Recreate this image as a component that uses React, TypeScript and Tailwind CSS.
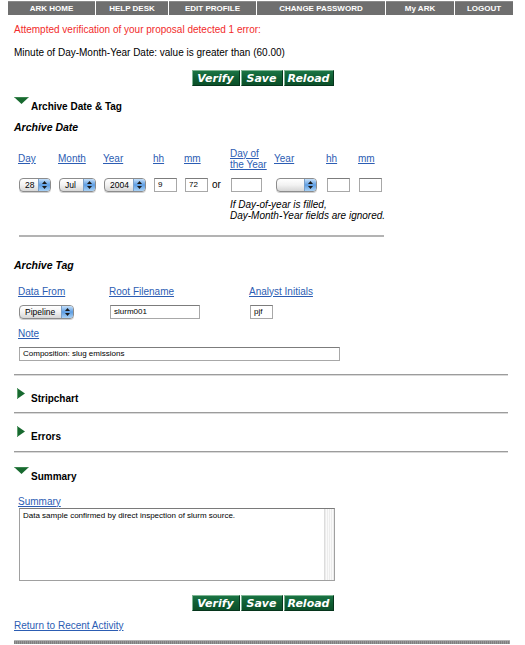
import React from "react";

const NAV = [
  { label: "ARK HOME", w: "w-[87px]" },
  { label: "HELP DESK", w: "w-[72px]" },
  { label: "EDIT PROFILE", w: "w-[87px]" },
  { label: "CHANGE PASSWORD", w: "w-[128px]" },
  { label: "My ARK", w: "w-[68px]" },
  { label: "LOGOUT", w: "w-[58px]" },
];

function GreenButton({ label, w }: { label: string; w: string }) {
  return (
    <button
      className={`${w} h-[16px] flex items-center justify-center border border-t-[#7fb593] border-l-[#7fb593] border-b-[#06351c] border-r-[#06351c] bg-gradient-to-b from-[#1a7444] via-[#0f5e33] to-[#0b5029] text-white text-[11px] leading-none font-bold italic font-['DejaVu_Sans',sans-serif]`}
    >
      {label}
    </button>
  );
}

function ButtonBar() {
  return (
    <div className="flex justify-center gap-[1px]">
      <GreenButton label="Verify" w="w-[48px]" />
      <GreenButton label="Save" w="w-[42px]" />
      <GreenButton label="Reload" w="w-[50px]" />
    </div>
  );
}

function DownTriangle() {
  return (
    <svg width="15" height="7" viewBox="0 0 15 7" className="shrink-0">
      <polygon points="0,0 15,0 7.5,7" fill="#17692f" />
      <line x1="0.5" y1="0.5" x2="14.5" y2="0.5" stroke="#5fa06f" strokeWidth="1" strokeDasharray="1 1" />
    </svg>
  );
}

function RightTriangle() {
  return (
    <svg width="8" height="11" viewBox="0 0 8 11" className="shrink-0">
      <polygon points="0,0 8,5.5 0,11" fill="#17692f" />
      <line x1="0.5" y1="0.5" x2="0.5" y2="10.5" stroke="#5fa06f" strokeWidth="1" />
    </svg>
  );
}

function SectionHeader({ label, open }: { label: string; open: boolean }) {
  if (open) {
    return (
      <div className="flex items-start pl-[14px]">
        <div className="mt-[1px]">
          <DownTriangle />
        </div>
        <span className="ml-[2px] mt-[5px] text-[10px] leading-[12px] font-bold text-black">{label}</span>
      </div>
    );
  }
  return (
    <div className="flex items-start pl-[17px]">
      <div className="mt-[1px]">
        <RightTriangle />
      </div>
      <span className="ml-[6px] mt-[6px] text-[10px] leading-[12px] font-bold text-black">{label}</span>
    </div>
  );
}

function Link({ children, className = "" }: { children: React.ReactNode; className?: string }) {
  return (
    <a href="#" className={`text-[#2c5db3] underline text-[10px] leading-[11px] ${className}`}>
      {children}
    </a>
  );
}

function AquaSelect({ value, w }: { value: string; w: string }) {
  return (
    <div
      className={`${w} h-[14px] flex items-stretch rounded-[4px] border border-[#8c8c8c] bg-gradient-to-b from-white via-[#f2f2f2] to-[#d6d6d6] overflow-hidden shadow-[0_1px_0_#d0d0d0]`}
    >
      <div className="flex-1 flex items-center pl-[5px] text-[8.5px] leading-none text-black">{value}</div>
      <div className="w-[12px] flex items-center justify-center border-l border-[#7a9fc8] bg-gradient-to-b from-[#c5e0fa] via-[#5d9de2] to-[#a9d2f6]">
        <svg width="5" height="8" viewBox="0 0 5 8">
          <polygon points="2.5,0 5,3 0,3" fill="#1a1a1a" />
          <polygon points="0,5 5,5 2.5,8" fill="#1a1a1a" />
        </svg>
      </div>
    </div>
  );
}

function TextBox({ value = "", w }: { value?: string; w: string }) {
  return (
    <div
      className={`${w} h-[14px] flex items-center border border-[#a8a8a8] border-t-[#7c7c7c] bg-white pl-[3px] text-[8px] leading-none text-black`}
    >
      {value}
    </div>
  );
}

function Rule() {
  return <div className="ml-[14px] w-[494px] h-[2px] border-t border-[#9c9c9c] bg-[#d9d9d9]" />;
}

export default function App() {
  return (
    <div className="w-[525px] h-[645px] overflow-hidden bg-white font-['Liberation_Sans',Arial,sans-serif] text-black">
      {/* top navigation */}
      <nav className="ml-[8px] mt-[1px] flex h-[14px] w-[505px] gap-[1px]">
        {NAV.map((n) => (
          <div
            key={n.label}
            className={`${n.w} flex items-center justify-center bg-[#6f6f6f] border-t border-[#8a8a8a] text-white text-[8px] font-bold leading-none`}
          >
            {n.label}
          </div>
        ))}
      </nav>

      <p className="mt-[9px] pl-[14px] text-[10px] leading-[12px] text-[#f22b2b]">
        Attempted verification of your proposal detected 1 error:
      </p>
      <p className="mt-[11px] pl-[14px] text-[10px] leading-[12px]">
        Minute of Day-Month-Year Date: value is greater than (60.00)
      </p>

      <div className="mt-[11px]">
        <ButtonBar />
      </div>

      <div className="mt-[10px]">
        <SectionHeader label="Archive Date & Tag" open />
      </div>

      <h3 className="mt-[8px] pl-[14px] text-[10.5px] leading-[13px] font-bold italic">Archive Date</h3>

      {/* date headers */}
      <div className="mt-[13px] ml-[18px] grid grid-cols-[40px_45px_50px_31px_31px_15px_44px_52px_32px_40px] items-center h-[23px]">
        <Link>Day</Link>
        <Link>Month</Link>
        <Link>Year</Link>
        <Link>hh</Link>
        <Link>mm</Link>
        <span />
        <Link className="leading-[11px]">
          Day of
          <br />
          the Year
        </Link>
        <Link>Year</Link>
        <Link>hh</Link>
        <Link>mm</Link>
      </div>

      {/* date controls */}
      <div className="mt-[8px] ml-[18px] grid grid-cols-[40px_45px_50px_31px_31px_15px_44px_52px_32px_40px] items-center h-[14px]">
        <div className="pl-[1px]"><AquaSelect value="28" w="w-[32px]" /></div>
        <div className="pl-[1px]"><AquaSelect value="Jul" w="w-[37px]" /></div>
        <div className="pl-[1px]"><AquaSelect value="2004" w="w-[42px]" /></div>
        <div className="pl-[1px]"><TextBox value="9" w="w-[23px]" /></div>
        <div className="pl-[1px]"><TextBox value="72" w="w-[23px]" /></div>
        <span className="text-[10px] leading-none -ml-[3px]">or</span>
        <div className="pl-[1px]"><TextBox w="w-[31px]" /></div>
        <div className="pl-[2px]"><AquaSelect value="" w="w-[41px]" /></div>
        <div className="pl-[1px]"><TextBox w="w-[23px]" /></div>
        <div className="pl-[1px]"><TextBox w="w-[23px]" /></div>
      </div>

      <p className="mt-[7px] ml-[230px] text-[10px] leading-[11px] italic">
        If Day-of-year is filled,
        <br />
        Day-Month-Year fields are ignored.
      </p>

      <div className="mt-[14px] ml-[19px] w-[365px] h-[2px] bg-[#b3b3b3]" />

      <h3 className="mt-[22px] pl-[14px] text-[10.5px] leading-[13px] font-bold italic">Archive Tag</h3>

      <div className="mt-[13px] ml-[18px] grid grid-cols-[91px_140px_100px] items-center h-[12px]">
        <Link>Data From</Link>
        <Link>Root Filename</Link>
        <Link>Analyst Initials</Link>
      </div>
      <div className="mt-[8px] ml-[18px] grid grid-cols-[91px_140px_100px] items-center h-[14px]">
        <div className="pl-[1px]"><AquaSelect value="Pipeline" w="w-[55px]" /></div>
        <div className="pl-[1px]"><TextBox value="slurm001" w="w-[90px]" /></div>
        <div className="pl-[1px]"><TextBox value="pjf" w="w-[23px]" /></div>
      </div>

      <div className="mt-[8px] ml-[18px] h-[12px] flex items-center">
        <Link>Note</Link>
      </div>
      <div className="mt-[8px] ml-[19px]">
        <TextBox value="Composition: slug emissions" w="w-[321px]" />
      </div>

      <div className="mt-[13px]">
        <Rule />
      </div>
      <div className="mt-[11px]">
        <SectionHeader label="Stripchart" open={false} />
      </div>
      <div className="mt-[7px]">
        <Rule />
      </div>
      <div className="mt-[11px]">
        <SectionHeader label="Errors" open={false} />
      </div>
      <div className="mt-[8px]">
        <Rule />
      </div>
      <div className="mt-[13px]">
        <SectionHeader label="Summary" open />
      </div>

      <div className="mt-[12px] ml-[18px] h-[12px] flex items-center">
        <Link>Summary</Link>
      </div>
      <div className="mt-[1px] ml-[19px] w-[316px] h-[73px] flex border border-[#a0a0a0] border-t-[#7a7a7a] bg-white">
        <div className="flex-1 pl-[3px] pt-[2px] text-[8px] leading-[10px]">
          Data sample confirmed by direct inspection of slurm source.
        </div>
        <div className="w-[10px] h-full border-l border-[#dcdcdc] bg-[repeating-linear-gradient(90deg,#ececec_0px,#ececec_1px,#fafafa_1px,#fafafa_2px)]" />
      </div>

      <div className="mt-[14px]">
        <ButtonBar />
      </div>

      <div className="mt-[9px] pl-[14px] h-[12px] flex items-center">
        <a href="#" className="text-[#2c5db3] underline text-[10px] leading-[12px]">
          Return to Recent Activity
        </a>
      </div>

      <div className="mt-[8px] ml-[14px] w-[496px] h-[4px] border-t border-[#b4b4b4] bg-[repeating-linear-gradient(90deg,#7f7f7f_0px,#7f7f7f_1px,#9a9a9a_1px,#9a9a9a_2px)]" />
    </div>
  );
}
